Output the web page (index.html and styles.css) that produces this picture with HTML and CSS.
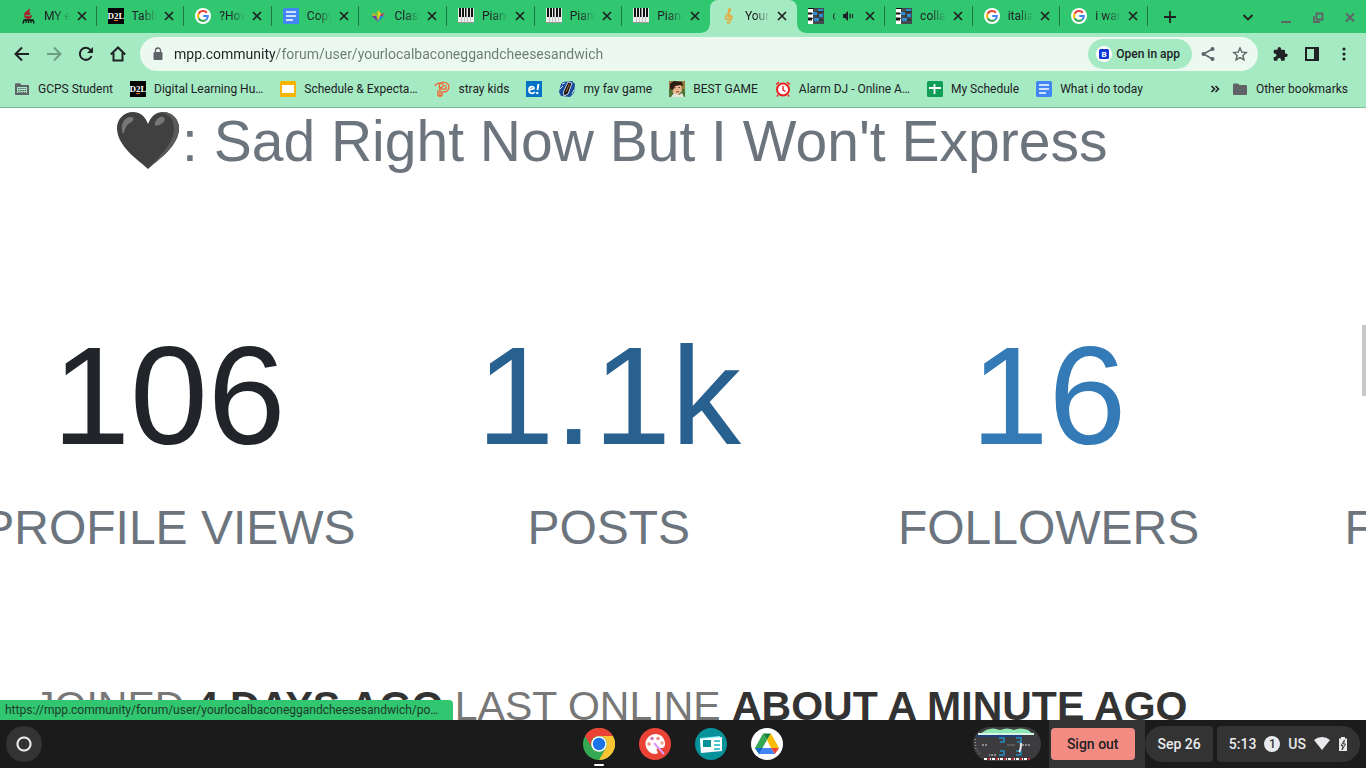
FILE: index.html
```html
<!DOCTYPE html>
<html lang="en">
<head>
  <meta charset="UTF-8">
  <meta name="viewport" content="width=device-width, initial-scale=1.0">
  <title>yourlocalbaconeggandcheesesandwich</title>
  <link rel="stylesheet" href="styles.css">
</head>
<body>
  <!-- shared icons -->
  <svg class="sprite" aria-hidden="true">
    <symbol id="i-close" viewBox="0 0 16 16"><path d="M4 4l8 8M12 4l-8 8" stroke="currentColor" stroke-width="1.7" fill="none"/></symbol>
    <symbol id="i-d2l" viewBox="0 0 16 16"><rect width="16" height="16" fill="#000"/><text x="8" y="11" text-anchor="middle" font-family="Liberation Serif, serif" font-weight="bold" font-size="9" fill="#fff">D2L</text><path d="M6 12.500h4" stroke="#e87511"/></symbol>
    <symbol id="i-google" viewBox="0 0 16 16"><circle cx="8" cy="8" r="8" fill="#fff"/><g fill="none" stroke-width="2.100"><path d="M11.800 4.700A4.900 4.900 0 0 0 3.600 5.800" stroke="#ea4335"/><path d="M3.600 5.800A4.900 4.900 0 0 0 3.600 10.200" stroke="#fbbc05"/><path d="M3.600 10.200A4.900 4.900 0 0 0 11.200 11.700" stroke="#34a853"/><path d="M11.200 11.700A4.900 4.900 0 0 0 12.800 8H8.200" stroke="#4285f4"/></g></symbol>
    <symbol id="i-docs" viewBox="0 0 16 16"><rect width="16" height="16" rx="1.500" fill="#4285f4"/><path d="M3 4h10M3 8h10M3 12h7" stroke="#fff" stroke-width="1.700"/></symbol>
    <symbol id="i-piano" viewBox="0 0 16 16"><rect y="0" width="16" height="15" rx="1" fill="#eee"/><path d="M3.500 9v6M6.500 9v6M9.500 9v6M12.500 9v6" stroke="#aaa" stroke-width=".6"/><path d="M1 0h2v9H1zM4 0h2v9H4zM7 0h1.500v9H7zM10 0h2v9h-2zM13 0h2v9h-2z" fill="#111"/><path d="M0 14.500h16" stroke="#999"/></symbol>
    <symbol id="i-mpp" viewBox="0 0 16 16"><rect width="16" height="16" fill="#444a50"/><path d="M0 1h5v4H0zM0 6h5v4H0zM0 11h5v5H0z" fill="#fff"/><path d="M0 0h6v1H0zM0 4.500h4v2H0zM0 9.500h4v3H0z" fill="#111"/><path d="M5 4h4v3H5zM11 6h4v3h-4zM6 10h5v3H6zM10 1h5v2h-5z" fill="#2e8fd0"/><path d="M9 4h6M9 8h2M11 12h4" stroke="#222"/></symbol>
  </svg>

  <header class="browser">
    <div class="tabstrip">
      <div class="tabs">
        <div class="tab">
          <svg class="favicon" viewBox="0 0 16 16"><path d="M9 0C9 3 4 3 4 7c0 3 2 4 4 4 3 0 4-2 4-4l-2 1c1-2 1-3-1-4 1-1 1-3 0-4z" fill="#a5232b"/><path d="M5 7c2 1 4 1 6-1" stroke="#31c670" fill="none"/><path d="M3 15.500l1-3.500h9l1 3.500M6 12v3M8.500 12v3M11 12v3" stroke="#111" stroke-width="1.300" fill="none"/></svg>
          <button class="tab-title">MY e</button>
          <button class="tab-close" aria-label="Close tab"><svg><use href="#i-close"/></svg></button>
        </div>
        <div class="tab">
          <svg class="favicon"><use href="#i-d2l"/></svg>
          <button class="tab-title">Table</button>
          <button class="tab-close" aria-label="Close tab"><svg><use href="#i-close"/></svg></button>
        </div>
        <div class="tab">
          <svg class="favicon"><use href="#i-google"/></svg>
          <button class="tab-title">?How</button>
          <button class="tab-close" aria-label="Close tab"><svg><use href="#i-close"/></svg></button>
        </div>
        <div class="tab">
          <svg class="favicon"><use href="#i-docs"/></svg>
          <button class="tab-title">Copy</button>
          <button class="tab-close" aria-label="Close tab"><svg><use href="#i-close"/></svg></button>
        </div>
        <div class="tab">
          <svg class="favicon" viewBox="0 0 16 16"><path d="M8 13L1 5l4 1z" fill="#e3a51a"/><path d="M8 13L5 6l3-4 3 4z" fill="#7cc242"/><path d="M8 2l3 4-3 7z" fill="#f3d21b"/><path d="M8 13l7-8-4 1z" fill="#c02d6b"/><path d="M2 8l6 6-2-6z" fill="#7a36a5"/><path d="M14 8l-6 6 2-6z" fill="#2787d8"/></svg>
          <button class="tab-title">Class</button>
          <button class="tab-close" aria-label="Close tab"><svg><use href="#i-close"/></svg></button>
        </div>
        <div class="tab">
          <svg class="favicon"><use href="#i-piano"/></svg>
          <button class="tab-title">Piano</button>
          <button class="tab-close" aria-label="Close tab"><svg><use href="#i-close"/></svg></button>
        </div>
        <div class="tab">
          <svg class="favicon"><use href="#i-piano"/></svg>
          <button class="tab-title">Piano</button>
          <button class="tab-close" aria-label="Close tab"><svg><use href="#i-close"/></svg></button>
        </div>
        <div class="tab before-active">
          <svg class="favicon"><use href="#i-piano"/></svg>
          <button class="tab-title">Piano</button>
          <button class="tab-close" aria-label="Close tab"><svg><use href="#i-close"/></svg></button>
        </div>
        <div class="tab active">
          <svg class="favicon" viewBox="0 0 16 16"><path d="M6 14c1 2 3 1 3-1L7.500 3C7.500 1 9 0 9.500 1.500c.5 2-5 5-5 8 0 3 6 3 6.500.5C11 7 7 7 7 9.500" fill="none" stroke="#e5a93c" stroke-width="1.400"/></svg>
          <button class="tab-title">Your</button>
          <button class="tab-close" aria-label="Close tab"><svg><use href="#i-close"/></svg></button>
        </div>
        <div class="tab">
          <svg class="favicon"><use href="#i-mpp"/></svg>
          <button class="tab-title short">c</button>
          <svg class="audio" viewBox="0 0 12 12"><path d="M1 4h2l3-3v10L3 8H1z" fill="#202124"/><path d="M8 3.500v5M10.500 4v4" stroke="#202124" stroke-width="1.200"/></svg>
          <button class="tab-close" aria-label="Close tab"><svg><use href="#i-close"/></svg></button>
        </div>
        <div class="tab">
          <svg class="favicon"><use href="#i-mpp"/></svg>
          <button class="tab-title">collab</button>
          <button class="tab-close" aria-label="Close tab"><svg><use href="#i-close"/></svg></button>
        </div>
        <div class="tab">
          <svg class="favicon"><use href="#i-google"/></svg>
          <button class="tab-title">italia</button>
          <button class="tab-close" aria-label="Close tab"><svg><use href="#i-close"/></svg></button>
        </div>
        <div class="tab">
          <svg class="favicon"><use href="#i-google"/></svg>
          <button class="tab-title">i wan</button>
          <button class="tab-close" aria-label="Close tab"><svg><use href="#i-close"/></svg></button>
        </div>
      </div>
      <button class="new-tab" aria-label="New tab"><svg viewBox="0 0 16 16"><path d="M8 2v12M2 8h12" stroke="#202124" stroke-width="1.800"/></svg></button>
      <div class="window-controls">
        <button aria-label="Search tabs"><svg viewBox="0 0 16 16"><path d="M3.500 6L8 10.500 12.500 6" fill="none" stroke="#202124" stroke-width="1.800"/></svg></button>
        <button aria-label="Minimize"><svg viewBox="0 0 16 16"><path d="M3 13h10" stroke="#5f6368" stroke-width="2"/></svg></button>
        <button aria-label="Restore"><svg viewBox="0 0 16 16"><path d="M6.500 4.500h6v6h-6zM4 7v6h6" fill="none" stroke="#5f6368" stroke-width="1.800"/></svg></button>
        <button aria-label="Close"><svg viewBox="0 0 16 16"><path d="M4 4.500l8 8M12 4.500l-8 8" stroke="#5f6368" stroke-width="2"/></svg></button>
      </div>
    </div>

    <div class="toolbar">
      <button aria-label="Back"><svg viewBox="0 0 16 16"><path d="M15 8H2M8 1.500L1.500 8 8 14.500" fill="none" stroke="#202124" stroke-width="2"/></svg></button>
      <button aria-label="Forward"><svg viewBox="0 0 16 16"><path d="M1 8h13M8 1.500L14.500 8 8 14.500" fill="none" stroke="#6d9c80" stroke-width="2"/></svg></button>
      <button aria-label="Reload"><svg viewBox="0 0 16 16"><path d="M13.500 10A6 6 0 1 1 12.500 4" fill="none" stroke="#202124" stroke-width="2"/><path d="M15 1v6H9z" fill="#202124"/></svg></button>
      <button aria-label="Home"><svg viewBox="0 0 16 16"><path d="M.8 8.500L8 1.500l7.200 7M3.500 7v7.500h9V7" fill="none" stroke="#202124" stroke-width="2"/></svg></button>
      <div class="omnibox">
        <svg class="lock" viewBox="0 0 16 16"><rect x="3.500" y="6" width="9" height="8" rx="1" fill="#5f6368"/><path d="M5.500 7V4.500a2.500 2.500 0 0 1 5 0V7" fill="none" stroke="#5f6368" stroke-width="1.300"/></svg>
        <input class="url" type="text" aria-label="Address" value="mpp.community/forum/user/yourlocalbaconeggandcheesesandwich">
        <button class="open-app">
          <svg viewBox="0 0 16 16"><circle cx="8" cy="8" r="8" fill="#fff"/><rect x="3" y="3" width="10" height="10" rx="1.500" fill="#1238d6"/><text x="8" y="11" text-anchor="middle" font-family="Roboto, sans-serif" font-weight="bold" font-size="8" fill="#fff">B</text></svg>
          Open in app
        </button>
        <button aria-label="Share"><svg viewBox="0 0 16 16"><path d="M12.500 3L3.500 8l9 5" fill="none" stroke="#5f6368" stroke-width="1.500"/><circle cx="12.500" cy="3" r="2" fill="#5f6368"/><circle cx="3.500" cy="8" r="2" fill="#5f6368"/><circle cx="12.500" cy="13" r="2" fill="#5f6368"/></svg></button>
        <button aria-label="Bookmark this tab"><svg viewBox="0 0 16 16"><path d="M8 2l1.800 4.100 4.500.4-3.400 3 1 4.400L8 11.600l-3.900 2.300 1-4.400-3.400-3 4.500-.4z" fill="none" stroke="#5f6368" stroke-width="1.400"/></svg></button>
      </div>
      <div class="toolbar-end">
        <button aria-label="Extensions"><svg viewBox="0 0 16 16"><path d="M14 7.500h-1V5a1.300 1.300 0 0 0-1.300-1.300H9V2.600a1.700 1.700 0 0 0-3.400 0v1.100H3A1.300 1.300 0 0 0 1.700 5v2.400h1a1.800 1.800 0 0 1 0 3.600h-1v2.500c0 .7.600 1.300 1.300 1.300h2.400v-1a1.800 1.800 0 0 1 3.600 0v1h2.500c.7 0 1.300-.6 1.300-1.300v-2.600H14a1.700 1.700 0 0 0 0-3.400z" fill="#202124"/></svg></button>
        <button aria-label="Side panel"><svg viewBox="0 0 16 16"><path d="M2 2h12v12H2z" fill="none" stroke="#202124" stroke-width="2"/><path d="M10 2h5v12h-5z" fill="#202124"/></svg></button>
        <button aria-label="Menu"><svg viewBox="0 0 16 16"><circle cx="8" cy="3" r="1.600" fill="#202124"/><circle cx="8" cy="8" r="1.600" fill="#202124"/><circle cx="8" cy="13" r="1.600" fill="#202124"/></svg></button>
      </div>
    </div>

    <nav class="bookmarks">
      <a href="#"><svg viewBox="0 0 16 16"><path d="M1 3.500c0-.8.400-1.200 1.200-1.200H6L7.500 4H14c.7 0 1 .4 1 1v8c0 .6-.3 1-1 1H2c-.7 0-1-.4-1-1z" fill="#5f6368"/><path d="M3 6h10v6H3z" fill="#a6eac3"/><path d="M4 7.500h8M4 9.500h8M4 11.300h8" stroke="#5f6368" stroke-width="1.200" stroke-dasharray="1.500 .7"/></svg>GCPS Student</a>
      <a href="#"><svg><use href="#i-d2l"/></svg>Digital Learning Hu…</a>
      <a href="#"><svg viewBox="0 0 16 16"><rect width="16" height="16" rx="1.500" fill="#f9b400"/><rect x="2" y="4" width="12" height="8" fill="#fff"/></svg>Schedule &amp; Expecta…</a>
      <a href="#"><svg viewBox="0 0 16 16"><path d="M6 15V6M4 15h4M4 15V9M8 15v-4h2a4.500 4.500 0 0 0 0-9.800C6 1 4 4 6 7.500M1 5c1-3 7-4 8-1.500 1 2-2 4-4 3.500M10 4.200c3 .5 3 4 0 4H7" fill="none" stroke="#f0642f" stroke-width="1.300"/></svg>stray kids</a>
      <a href="#" aria-label="e!"><svg viewBox="0 0 16 16"><rect width="16" height="16" fill="#0472c4"/><path d="M3 9l5-1.500C8 4.500 3 5 3 9s4 4 6 2" fill="none" stroke="#fff" stroke-width="1.700"/><path d="M12.500 3l-1 6" stroke="#fff" stroke-width="1.900"/><circle cx="11.300" cy="12" r="1.200" fill="#fff"/></svg></a>
      <a href="#"><svg viewBox="0 0 16 16"><path d="M4 1l9-1 3 3-1 9-4 4-9-1-2-4 2-8z" fill="#174b9b"/><path d="M3 3l3-1M1 8l3-3M13 13l2-4" stroke="#d5e4f5"/><path d="M9 1l4 1-4 11-4 2-.5-4z" fill="#17110f" stroke="#fff" stroke-width=".8"/><path d="M10.500 3L7 11" stroke="#b5733a"/></svg>my fav game</a>
      <a href="#"><svg viewBox="0 0 16 16"><rect width="16" height="16" fill="#9a7b3f"/><path d="M0 8h16v8H0z" fill="#507333"/><path d="M3 5l9-1 1 6-4 4-5-2z" fill="#eab78f"/><path d="M1 8V3l4-3 8 1 1 4-3-1-5 1-2 4z" fill="#2a1b13"/><path d="M2 16l3-4 5 2 3-2 2 4z" fill="#e7e5e0"/><path d="M5 7l2-.5M9 6.500h2M7 11l3-.5" stroke="#59331f" stroke-width=".8"/></svg>BEST GAME</a>
      <a href="#"><svg viewBox="0 0 16 16"><circle cx="8" cy="8.500" r="6" fill="#fff" stroke="#ee1c1c" stroke-width="1.900"/><path d="M8 5v4l2.500 1.500M1 3.500L4 1M15 3.500L12 1M3 14l-1 1.500M13 14l1 1.500" fill="none" stroke="#ee1c1c" stroke-width="1.400"/></svg>Alarm DJ - Online A…</a>
      <a href="#"><svg viewBox="0 0 16 16"><rect width="16" height="16" rx="1.500" fill="#0f9d58"/><path d="M2 7h12M7.500 3v10" stroke="#fff" stroke-width="1.800"/></svg>My Schedule</a>
      <a href="#"><svg><use href="#i-docs"/></svg>What i do today</a>
      <button class="more" aria-label="More bookmarks"><svg viewBox="0 0 16 16"><path d="M4.500 5L7.500 8l-3 3M8.500 5l3 3-3 3" fill="none" stroke="#202124" stroke-width="1.600"/></svg></button>
      <a class="other" href="#"><svg viewBox="0 0 16 16"><path d="M1 4c0-1 .5-1.500 1.500-1.500H6L7.500 4H14c.7 0 1 .5 1 1v8c0 .700-.3 1-1 1H2c-.7 0-1-.3-1-1z" fill="#5f6368"/></svg>Other bookmarks</a>
    </nav>
  </header>

  <main class="page">
    <h1 class="status">
      <svg class="heart" viewBox="0 0 64 60"><path d="M32 58C24 50 1 36 1 17 1 8 8 1 17 1c7 0 12 4 15 12C35 5 40 1 47 1c9 0 16 7 16 16 0 19-23 33-31 41z" fill="#404040"/><path d="M47 1c9 0 16 7 16 16 0 19-23 33-31 41 9-11 26-24 26-41C58 8 53 3 44 1.300z" fill="#5a5a5a"/><path d="M6 19c-1-7 3-13 9-13 4 0 3 4-1 6-4 2-5 6-6 10-1 1-2-1-2-3z" fill="#777"/><path d="M39 12c1-4 5-7 8-6 3 1 2 5-2 7-3 2-7 3-6-1z" fill="#777"/></svg><span>: Sad Right Now But I Won't Express</span>
    </h1>
    <div class="stats">
      <div class="stat">
        <span class="count">106</span>
        <span class="label">PROFILE VIEWS</span>
      </div>
      <div class="stat">
        <a class="count hovered" href="#">1.1k</a>
        <span class="label">POSTS</span>
      </div>
      <div class="stat">
        <a class="count" href="#">16</a>
        <span class="label">FOLLOWERS</span>
      </div>
      <div class="stat">
        <span class="count">&nbsp;</span>
        <span class="label">FOLLOWING</span>
      </div>
    </div>
    <p class="meta">JOINED <strong>4 DAYS AGO</strong> LAST ONLINE <strong>ABOUT A MINUTE AGO</strong></p>
    <div class="scroll-thumb"></div>
    <div class="link-preview">https://mpp.community/forum/user/yourlocalbaconeggandcheesesandwich/po…</div>
  </main>

  <footer class="shelf">
    <div class="shelf-start">
      <button class="launcher" aria-label="Launcher"></button>
    </div>
    <div class="apps">
      <button class="running" aria-label="Chrome"><svg viewBox="0 0 32 32"><circle cx="16" cy="16" r="16" fill="#34a853"/><path d="M2.100 8A16 16 0 0 1 29.900 8H16a8 8 0 0 0-7 12z" fill="#ea4335"/><path d="M29.900 8A16 16 0 0 1 16 32l7-12a8 8 0 0 0-7-12z" fill="#fbc434"/><circle cx="16" cy="16" r="7.800" fill="#fff"/><circle cx="16" cy="16" r="6.200" fill="#1a73e8"/></svg></button>
      <button aria-label="Canvas"><svg viewBox="0 0 32 32"><circle cx="16" cy="16" r="16" fill="#ea4335"/><path d="M16 6a10 10 0 1 0 1 20c2-.2 2-2 1-3-1-2 0-3 2-3h3c2 0 3-2 3-4 0-6-4-10-10-10z" fill="#fff"/><circle cx="10" cy="16" r="1.800" fill="#f28b82"/><circle cx="13" cy="10.500" r="1.800" fill="#d279b7"/><circle cx="19" cy="10.500" r="1.800" fill="#f28b82"/><circle cx="23" cy="15" r="1.800" fill="#f5a19a"/><path d="M15 15l10 11" stroke="#dc9cf5" stroke-width="2.200"/></svg></button>
      <button aria-label="News"><svg viewBox="0 0 32 32"><circle cx="16" cy="16" r="16" fill="#06929a"/><path d="M5 10l20-2v15H6z" fill="#7feff2"/><path d="M5 11l22-2v14L6 25z" fill="#fff"/><path d="M8 12h8v7H8z" fill="#06929a"/><path d="M19 13h6M19 17h6M19 21h6" stroke="#12b5c0" stroke-width="1.500"/></svg></button>
      <button aria-label="Drive"><svg viewBox="0 0 32 32"><circle cx="16" cy="16" r="16" fill="#fff"/><path d="M12 5.500h8L16 12z" fill="#188038"/><path d="M12 5.500L16 12 8 26 4 20z" fill="#34a853"/><path d="M20 5.500L28 20h-8l-4-8z" fill="#fbbc04"/><path d="M8 26l4-6h8l4 6z" fill="#4285f4"/><path d="M4 20h8l-4 6z" fill="#1967d2"/><path d="M28 20h-8l4 6z" fill="#ea4335"/></svg></button>
    </div>
    <div class="tray">
      <button class="preview" aria-label="Recent screenshots"><svg viewBox="0 0 68 34"><rect width="68" height="34" rx="17" fill="#3c3c3f"/><path d="M13 3q7-3 14 0q7-3 14 0q7-3 14 0l5 4H7z" fill="#8fe8b4"/><path d="M5 6h56v2H5z" fill="#d7f7e3"/><path d="M4 9h45" stroke="#203f80" stroke-width="2"/><path d="M26 11h5v4h-4M43 11h5v4h-4M27 24h4v4h-5M43 24h5v4h-5" fill="none" stroke="#248bc0" stroke-width="1.500"/><path d="M9 18h6M49 18h9M23 28h-7" stroke="#ddd" stroke-dasharray="2 1"/><path d="M34 18h8" stroke="#777"/><path d="M48 16c0 4 0 7-2 9" stroke="#e8eef0" stroke-width="2" fill="none"/><path d="M2 12l1 10 4 5" fill="none" stroke="#bbb" stroke-dasharray="1 2"/><path d="M11 32h46" stroke="#fff" stroke-width="2" stroke-dasharray="3 1"/><path d="M15 32h42" stroke="#cb2b39" stroke-width="2" stroke-dasharray="2 6"/></svg></button>
      <div class="sign-out-box"><button class="sign-out">Sign out</button></div>
      <button class="date">Sep 26</button>
      <button class="system">
        <span>5:13</span>
        <span class="badge">1</span>
        <span>US</span>
        <svg viewBox="0 0 16 16"><path d="M0 4a12 12 0 0 1 16 0L8 14z" fill="#e8eaed"/></svg>
        <svg class="battery" viewBox="0 0 10 16"><path d="M3 1h4v1.500h2V15H1V2.500h2z" fill="#e8eaed"/><path d="M6.500 4L3 9.500h2L4 14l3.500-6H5.500z" fill="#e8eaed" stroke="#333" stroke-width=".9"/></svg>
      </button>
    </div>
  </footer>
</body>
</html>
```
FILE: styles.css
```css
* {
  box-sizing: border-box;
}
body {
  margin: 0;
  height: 100vh;
  display: flex;
  flex-direction: column;
  overflow: hidden;
  font-family: Roboto, sans-serif;
  font-size: 12px;
  color: #202124;
  background: #fff;
}
button {
  padding: 0;
  border: 0;
  background: none;
  font: inherit;
  color: inherit;
  cursor: pointer;
}
a {
  color: inherit;
  text-decoration: none;
}
svg {
  display: block;
  flex: none;
  width: 16px;
  height: 16px;
}
.sprite {
  position: absolute;
  width: 0;
  height: 0;
}

/* tab strip */
.browser {
  flex: none;
  background: #a6eac3;
  border-bottom: 1px solid #7fb899;
}
.tabstrip {
  display: flex;
  align-items: center;
  height: 33px;
  padding: 0 8px 0 9px;
  background: #31c670;
}
.tabs {
  flex: 1;
  min-width: 0;
  display: flex;
  height: 100%;
}
.tab {
  position: relative;
  flex: 1;
  min-width: 0;
  display: flex;
  align-items: center;
  padding: 0 7px 2px 11px;
}
.tab::after {
  content: "";
  position: absolute;
  right: 0;
  top: 6px;
  width: 1px;
  height: 20px;
  background: #1d7743;
}
.tab.active::after,
.tab.before-active::after {
  display: none;
}
.tab.active {
  background: #a6eac3;
  border-radius: 8px 8px 0 0;
}
/* curved feet of the active tab */
.tab.active::before {
  content: "";
  position: absolute;
  left: -8px;
  right: -8px;
  bottom: 0;
  height: 8px;
  background:
    radial-gradient(circle at 0 0, transparent 7px, #a6eac3 8px) left / 8px 8px no-repeat,
    radial-gradient(circle at 100% 0, transparent 7px, #a6eac3 8px) right / 8px 8px no-repeat;
}
.tab-title {
  flex: 1;
  min-width: 0;
  margin-left: 8px;
  overflow: hidden;
  text-align: left;
  white-space: nowrap;
  -webkit-mask-image: linear-gradient(to right, #000 40%, transparent);
  mask-image: linear-gradient(to right, #000 40%, transparent);
}
.tab-title.short {
  flex: 0 1 4px;
}
.audio {
  width: 12px;
  height: 12px;
  margin: 0 auto 0 6px;
}
.tab-close {
  margin-left: 4px;
}
.new-tab {
  margin-left: 14px;
}
.window-controls {
  display: flex;
  gap: 16px;
  margin-left: 62px;
}
.window-controls button:first-child {
  margin-right: 6px;
}

/* toolbar */
.toolbar {
  display: flex;
  align-items: center;
  gap: 16px;
  height: 41px;
  padding: 0 14px;
}
.omnibox {
  flex: 1;
  display: flex;
  align-items: center;
  gap: 16px;
  height: 34px;
  margin: 0 -2px;
  padding: 0 10px;
  border-radius: 17px;
  background: #ecf9f1;
}
.lock {
  margin-right: -8px;
}
.url {
  flex: 1;
  min-width: 0;
  height: 24px;
  padding: 0;
  border: 0;
  outline: 0;
  font: 14px Roboto, sans-serif;
  /* host is darker than the path */
  color: transparent;
  background: linear-gradient(to right, #202124 101px, #6b7a72 101px);
  -webkit-background-clip: text;
  background-clip: text;
}
.open-app {
  display: flex;
  align-items: center;
  gap: 4px;
  height: 30px;
  margin-right: -8px;
  padding: 0 12px 0 8px;
  border-radius: 15px;
  background: #a6eac3;
  font-weight: 500;
}
.toolbar-end {
  display: flex;
  gap: 16px;
}

/* bookmarks bar */
.bookmarks {
  display: flex;
  align-items: center;
  gap: 17px;
  height: 33px;
  padding: 0 18px 4px 14px;
}
.bookmarks a {
  display: flex;
  align-items: center;
  gap: 8px;
  white-space: nowrap;
}
.more {
  margin-left: auto;
  margin-right: -8px;
}

/* profile page */
.page {
  position: relative;
  flex: 1;
  min-height: 0;
  overflow: hidden;
  font-family: "Liberation Sans", Arial, sans-serif;
}
.status {
  display: flex;
  align-items: center;
  gap: 2px;
  margin: 0;
  padding: 1px 0 0 116px;
  font-size: 57px;
  line-height: 64px;
  font-weight: 400;
  color: #6c757d;
  white-space: nowrap;
}
.heart {
  width: 64px;
  height: 60px;
}
.stats {
  display: grid;
  grid-template-columns: repeat(4, 32.2vw);
  margin: 143px 0 0 -51px;
}
.stat {
  display: flex;
  flex-direction: column;
  align-items: center;
  gap: 24px;
}
.count {
  font-size: 140px;
  line-height: 160px;
  color: #212529;
}
a.count {
  color: #337ab7;
}
a.count.hovered {
  color: #286090;
}
.label {
  font-size: 48px;
  line-height: 56px;
  color: #6c757d;
  white-space: nowrap;
}
.meta {
  margin: 126px 0 0;
  padding-left: 34px;
  font-size: 41px;
  line-height: 48px;
  color: #777;
  white-space: nowrap;
}
.meta strong {
  color: #333;
}
.scroll-thumb {
  position: absolute;
  top: 217px;
  right: 0;
  width: 4px;
  height: 71px;
  background: #c8c8c8;
}
.link-preview {
  position: absolute;
  left: 0;
  bottom: 0;
  padding: 0 15px 0 5px;
  border-radius: 0 4px 0 0;
  background: #31c670;
  font: 12px/20px Roboto, sans-serif;
  color: #1f3b2b;
}

/* shelf */
.shelf {
  flex: none;
  display: grid;
  grid-template-columns: 1fr auto 1fr;
  align-items: center;
  height: 48px;
  background: #1b1b1b;
  color: #e8eaed;
  font-size: 14px;
  font-weight: 500;
}
.launcher {
  display: block;
  width: 36px;
  height: 36px;
  margin-left: 6px;
  border-radius: 50%;
  background: radial-gradient(circle, #333 5px, #f1f1f1 6px, #f1f1f1 7px, #333 8px);
}
.apps {
  display: flex;
  gap: 24px;
}
.apps button {
  position: relative;
}
.apps svg {
  width: 32px;
  height: 32px;
}
.running::after {
  content: "";
  position: absolute;
  left: 11px;
  bottom: -6px;
  width: 10px;
  height: 2px;
  border-radius: 1px;
  background: #fff;
}
.tray {
  display: flex;
  align-items: center;
  justify-content: flex-end;
  height: 48px;
  padding-right: 6px;
}
.preview {
  margin-right: 8px;
}
.preview svg {
  width: 68px;
  height: 34px;
}
.sign-out-box {
  display: flex;
  align-items: center;
  height: 100%;
  padding: 0 10px 0 2px;
  background: #333;
}
.sign-out {
  height: 32px;
  padding: 0 16px;
  border-radius: 4px;
  background: #f28b82;
  color: #202124;
}
.date,
.system {
  height: 36px;
  background: #333;
}
.date {
  margin-right: 4px;
  padding: 0 12px 0 13px;
  border-radius: 18px 4px 4px 18px;
}
.system {
  display: flex;
  align-items: center;
  gap: 8px;
  padding: 0 12px;
  border-radius: 4px 18px 18px 4px;
}
.badge {
  width: 16px;
  height: 16px;
  border-radius: 50%;
  background: #e8eaed;
  color: #333;
  font-size: 12px;
  line-height: 16px;
}
.battery {
  width: 10px;
}
```
